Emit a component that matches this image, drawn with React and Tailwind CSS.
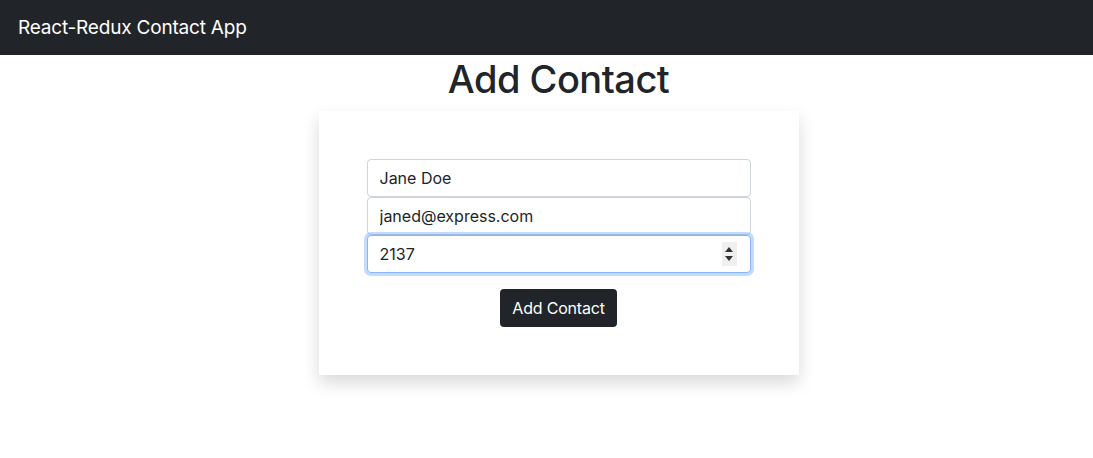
import React from "react";

const inputBase =
  "block w-full h-[38px] px-3 text-base text-[#212529] bg-white border border-[#ced4da] rounded outline-none";

export default function App() {
  return (
    <div className="min-h-screen bg-white text-[#212529] font-['Inter','Noto_Sans',sans-serif]">
      {/* Navbar */}
      <nav className="h-[55px] bg-[#212529] flex items-center px-[18px]">
        <span className="text-white text-[19px] leading-none tracking-[-0.2px]">React-Redux Contact App</span>
      </nav>

      <div className="pl-6">
        <h1 className="text-center text-[38px] font-medium leading-[48px] mb-2 tracking-[-0.5px]">Add Contact</h1>

        {/* Card */}
        <div className="mx-auto w-[480px] bg-white p-12 shadow-[0_8px_16px_rgba(0,0,0,0.15)]">
          <form className="flex flex-col">
            <input className={inputBase} defaultValue="Jane Doe" />
            <input className={inputBase} defaultValue="janed@express.com" />
            <div className="relative">
              <input
                className="block w-full h-[38px] px-3 text-base text-[#212529] bg-white border border-[#86b7fe] rounded outline-none shadow-[0_0_0_3px_rgba(13,110,253,0.25)]"
                defaultValue="2137"
              />
              {/* spinner */}
              <div className="absolute right-[14px] top-[7px] w-[15px] h-[24px] bg-[#efefef] flex flex-col items-center justify-center gap-[4px]">
                <svg width="8" height="5" viewBox="0 0 8 5"><path d="M4 0 L8 5 L0 5 Z" fill="#333" /></svg>
                <svg width="8" height="5" viewBox="0 0 8 5"><path d="M0 0 L8 0 L4 5 Z" fill="#333" /></svg>
              </div>
            </div>
            <div className="flex justify-center mt-4">
              <button
                type="button"
                className="h-[38px] px-3 bg-[#212529] text-white text-base rounded tracking-[-0.2px]"
              >
                Add Contact
              </button>
            </div>
          </form>
        </div>
      </div>
    </div>
  );
}
